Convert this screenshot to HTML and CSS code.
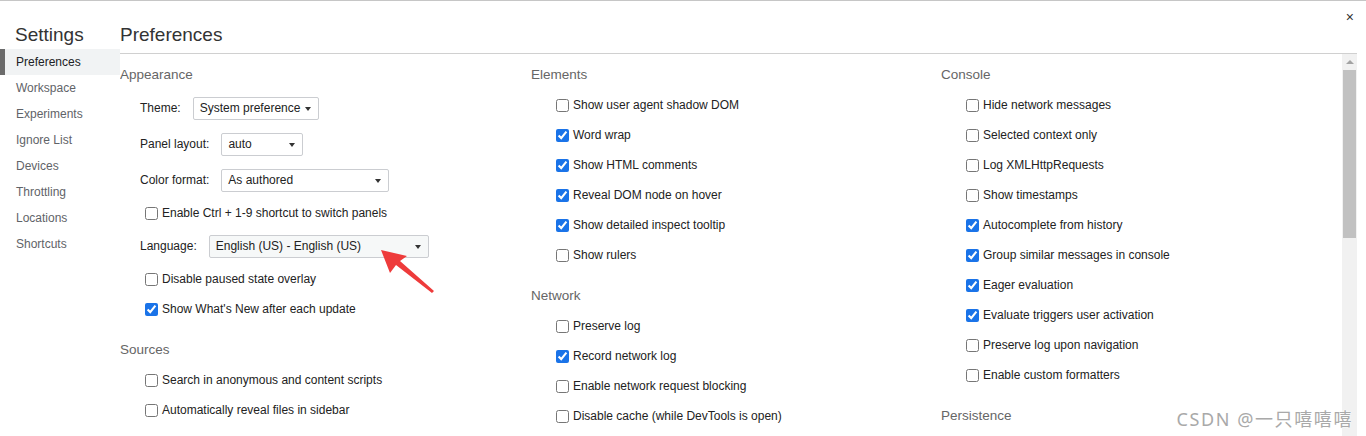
FILE: index.html
```html
<!DOCTYPE html>
<html>
<head>
<meta charset="utf-8">
<link rel="stylesheet" href="styles.css">
</head>
<body>
<div class="app">
  <aside class="sidebar">
    <div class="side-title">Settings</div>
    <nav class="side-nav">
      <div class="side-item selected">Preferences</div>
      <div class="side-item">Workspace</div>
      <div class="side-item">Experiments</div>
      <div class="side-item">Ignore List</div>
      <div class="side-item">Devices</div>
      <div class="side-item">Throttling</div>
      <div class="side-item">Locations</div>
      <div class="side-item">Shortcuts</div>
    </nav>
  </aside>
  <main class="main">
    <header class="header">Preferences</header>
    <div class="body">
      <div class="columns">
        <div class="col">
          <section class="section">
            <div class="sec-title">Appearance</div>
            <div class="srow"><span class="slabel">Theme:</span><div class="select w-theme">System preference<span class="caret"></span></div></div>
            <div class="srow"><span class="slabel">Panel layout:</span><div class="select w-panel">auto<span class="caret"></span></div></div>
            <div class="srow"><span class="slabel">Color format:</span><div class="select w-color">As authored<span class="caret"></span></div></div>
            <label class="crow"><input type="checkbox"><span>Enable Ctrl + 1-9 shortcut to switch panels</span></label>
            <div class="srow"><span class="slabel">Language:</span><div class="select w-lang hover">English (US) - English (US)<span class="caret"></span></div></div>
            <label class="crow"><input type="checkbox"><span>Disable paused state overlay</span></label>
            <label class="crow"><input type="checkbox" checked><span>Show What's New after each update</span></label>
          </section>
          <section class="section">
            <div class="sec-title">Sources</div>
            <label class="crow"><input type="checkbox"><span>Search in anonymous and content scripts</span></label>
            <label class="crow"><input type="checkbox"><span>Automatically reveal files in sidebar</span></label>
          </section>
        </div>
        <div class="col">
          <section class="section">
            <div class="sec-title">Elements</div>
            <label class="crow"><input type="checkbox"><span>Show user agent shadow DOM</span></label>
            <label class="crow"><input type="checkbox" checked><span>Word wrap</span></label>
            <label class="crow"><input type="checkbox" checked><span>Show HTML comments</span></label>
            <label class="crow"><input type="checkbox" checked><span>Reveal DOM node on hover</span></label>
            <label class="crow"><input type="checkbox" checked><span>Show detailed inspect tooltip</span></label>
            <label class="crow"><input type="checkbox"><span>Show rulers</span></label>
          </section>
          <section class="section">
            <div class="sec-title">Network</div>
            <label class="crow"><input type="checkbox"><span>Preserve log</span></label>
            <label class="crow"><input type="checkbox" checked><span>Record network log</span></label>
            <label class="crow"><input type="checkbox"><span>Enable network request blocking</span></label>
            <label class="crow"><input type="checkbox"><span>Disable cache (while DevTools is open)</span></label>
          </section>
        </div>
        <div class="col">
          <section class="section">
            <div class="sec-title">Console</div>
            <label class="crow"><input type="checkbox"><span>Hide network messages</span></label>
            <label class="crow"><input type="checkbox"><span>Selected context only</span></label>
            <label class="crow"><input type="checkbox"><span>Log XMLHttpRequests</span></label>
            <label class="crow"><input type="checkbox"><span>Show timestamps</span></label>
            <label class="crow"><input type="checkbox" checked><span>Autocomplete from history</span></label>
            <label class="crow"><input type="checkbox" checked><span>Group similar messages in console</span></label>
            <label class="crow"><input type="checkbox" checked><span>Eager evaluation</span></label>
            <label class="crow"><input type="checkbox" checked><span>Evaluate triggers user activation</span></label>
            <label class="crow"><input type="checkbox"><span>Preserve log upon navigation</span></label>
            <label class="crow"><input type="checkbox"><span>Enable custom formatters</span></label>
          </section>
          <section class="section">
            <div class="sec-title">Persistence</div>
          </section>
        </div>
      </div>
      <div class="scrollbar">
        <div class="sb-up"></div>
        <div class="sb-thumb"></div>
      </div>
    </div>
  </main>
  <div class="close">×</div>
  <svg class="arrow" width="70" height="60" viewBox="0 0 70 60">
    <polygon points="1,4 27,10 20,15 54,45 52,47 16,19 10,27" fill="#ee3b3b"/>
  </svg>
  <div class="watermark">CSDN @一只嘻嘻嘻</div>
</div>
</body>
</html>
```
FILE: styles.css
```css
* { box-sizing: border-box; }
html, body { margin: 0; padding: 0; }
body {
  width: 1366px;
  height: 436px;
  overflow: hidden;
  background: #fff;
  font-family: "Liberation Sans", Arial, sans-serif;
  font-size: 12px;
  color: #222;
}
.app {
  position: relative;
  display: flex;
  height: 436px;
  border-top: 1px solid #c6c6c6;
}
.sidebar {
  width: 120px;
  flex: none;
}
.side-title {
  height: 47px;
  padding: 21px 0 0 15px;
  font-size: 19px;
  line-height: 26px;
  color: #333;
}
.side-nav { padding-top: 1px; }
.side-item {
  height: 26px;
  line-height: 26px;
  padding-left: 16px;
  color: #5f6368;
}
.side-item.selected {
  background: #f1f3f4;
  color: #202124;
  box-shadow: inset 5px 0 0 #6b6b6b;
}
.main {
  flex: 1;
  display: flex;
  flex-direction: column;
  min-width: 0;
  margin-right: 9px;
}
.header {
  height: 53px;
  padding: 21px 0 0 0;
  font-size: 19px;
  line-height: 26px;
  color: #333;
  border-bottom: 1px solid #d0d0d0;
  flex: none;
}
.body {
  flex: 1;
  display: flex;
  overflow: hidden;
}
.columns {
  flex: 1;
  display: grid;
  grid-template-columns: 411px 410px 1fr;
  align-items: start;
  padding-top: 1px;
}
.section { margin-bottom: 6px; }
.sec-title {
  padding: 10px 0 5px 0;
  line-height: 20px;
  font-size: 13.5px;
  color: #666;
}
.crow {
  display: flex;
  align-items: center;
  height: 30px;
  padding-left: 25px;
}
.crow input {
  margin: 0 4px 0 0;
  width: 13px;
  height: 13px;
  accent-color: #1a73e8;
}
.srow {
  display: flex;
  align-items: center;
  height: 36px;
  padding-left: 20px;
}
.slabel { margin-right: 12px; }
.select {
  position: relative;
  height: 23px;
  line-height: 21px;
  padding-left: 6px;
  border: 1px solid #cbcdd1;
  border-radius: 2px;
  background: #fff;
  color: #222;
}
.select.hover { background: #f6f8f8; }
.caret {
  position: absolute;
  right: 7px;
  top: 9px;
  width: 0;
  height: 0;
  border-left: 3.5px solid transparent;
  border-right: 3.5px solid transparent;
  border-top: 4px solid #333;
}
.w-theme { width: 126px; }
.w-panel { width: 82px; }
.w-color { width: 168px; }
.w-lang { width: 220px; }
.scrollbar {
  width: 15px;
  flex: none;
  background: #f1f1f1;
  display: flex;
  flex-direction: column;
  align-items: center;
  padding-top: 6px;
}
.sb-up {
  width: 0;
  height: 0;
  border-left: 4px solid transparent;
  border-right: 4px solid transparent;
  border-bottom: 4px solid #a3a3a3;
}
.sb-thumb {
  margin-top: 6px;
  width: 13px;
  height: 168px;
  background: #c1c1c1;
}
.close {
  position: absolute;
  top: 8px;
  right: 12px;
  font-size: 14px;
  color: #333;
}
.arrow {
  position: absolute;
  left: 380px;
  top: 245px;
}
.watermark {
  position: absolute;
  right: 13px;
  top: 404px;
  font-family: "Noto Sans", "Noto Sans CJK SC", sans-serif;
  font-size: 18px;
  color: #a9a9a9;
  text-shadow: 0 0 2px #fff, 0 0 2px #fff;
  letter-spacing: 1.6px;
}
```
